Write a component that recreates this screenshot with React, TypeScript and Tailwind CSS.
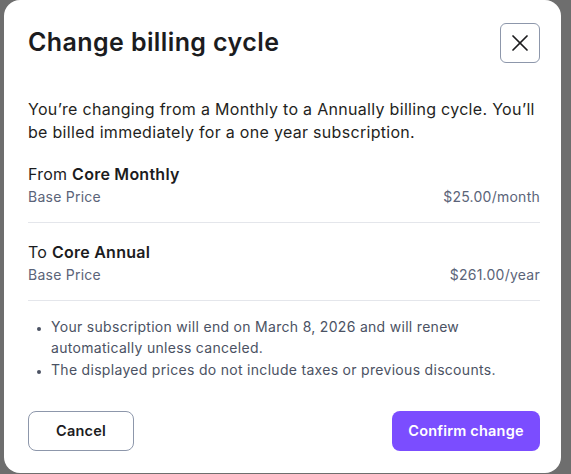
import { X } from 'lucide-react';

const App = () => {
  return (
    <div className="w-[571px] h-[474px] bg-[#6e6e6e] pl-[4px] overflow-hidden" style={{ fontFamily: 'Inter, "Open Sans", sans-serif' }}>
      <div className="w-[557px] h-[473px] bg-white rounded-[16px] pl-6 pr-[21px] pt-[23px]">
        {/* Header */}
        <div className="flex items-center justify-between">
          <h1 className="text-[25px] font-semibold text-[#1c1c1e] tracking-[0.4px]">Change billing cycle</h1>
          <button className="w-10 h-10 border border-[#8d97ab] rounded-[6px] flex items-center justify-center text-[#1c1c1e]">
            <X size={28} strokeWidth={1.5} />
          </button>
        </div>

        {/* Description */}
        <p className="mt-[35px] text-[16px] leading-[23px] tracking-[0.3px] text-[#1f1f22] whitespace-nowrap">
          You’re changing from a Monthly to a Annually billing cycle. You’ll
          <br />
          be billed immediately for a one year subscription.
        </p>

        {/* From */}
        <div className="mt-[18px] pb-[14px] border-b border-[#e4e6eb]">
          <p className="text-[16px] leading-[24px] tracking-[0.25px] text-[#1c1c1e]">
            From <span className="font-semibold">Core Monthly</span>
          </p>
          <div className="flex justify-between text-[14px] leading-[22px] tracking-[0.25px] text-[#5b6479]">
            <span>Base Price</span>
            <span>$25.00/month</span>
          </div>
        </div>

        {/* To */}
        <div className="pt-[17px] pb-[14px] border-b border-[#e4e6eb]">
          <p className="text-[16px] leading-[24px] tracking-[0.25px] text-[#1c1c1e]">
            To <span className="font-semibold">Core Annual</span>
          </p>
          <div className="flex justify-between text-[14px] leading-[22px] tracking-[0.25px] text-[#5b6479]">
            <span>Base Price</span>
            <span>$261.00/year</span>
          </div>
        </div>

        {/* Notes */}
        <ul className="mt-[15px] list-disc pl-[23px] text-[14px] leading-[21px] tracking-[0.3px] text-[#4b5263] space-y-[1px] marker:text-[#4b5263] marker:text-[11px]">
          <li>Your subscription will end on March 8, 2026 and will renew automatically unless canceled.</li>
          <li>The displayed prices do not include taxes or previous discounts.</li>
        </ul>

        {/* Footer */}
        <div className="mt-[31px] flex items-center justify-between">
          <button className="w-[106px] h-10 border border-[#8d97ab] rounded-[8px] text-[14.5px] font-semibold tracking-[0.2px] text-[#1c1c1e]">
            Cancel
          </button>
          <button className="w-[148px] h-10 bg-[#7b4dff] rounded-[8px] text-[14.5px] font-semibold tracking-[0.2px] text-white">
            Confirm change
          </button>
        </div>
      </div>
    </div>
  );
};

export default App;
